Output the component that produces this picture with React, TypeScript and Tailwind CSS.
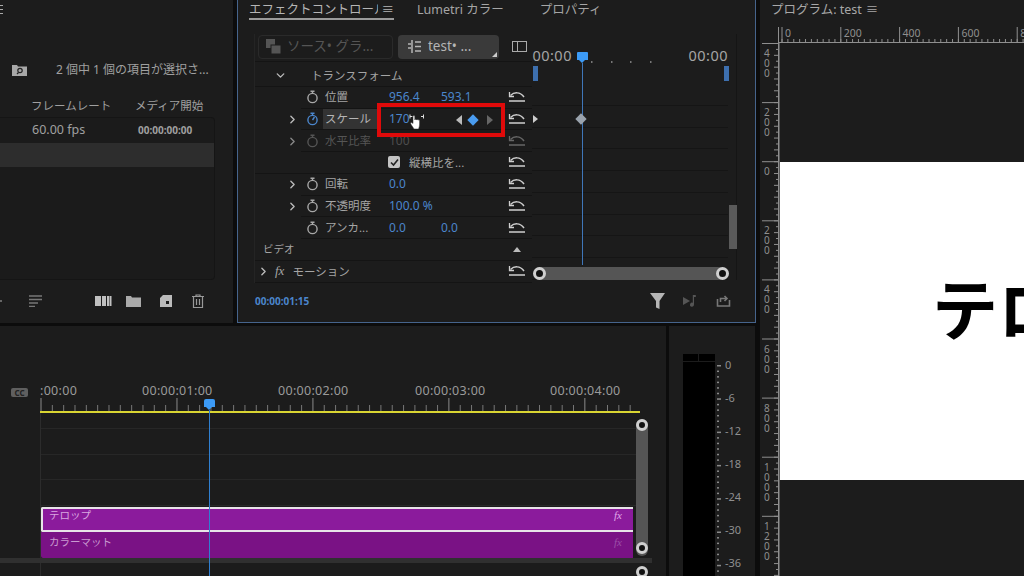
import { ChevronDown, ChevronRight } from "lucide-react";

const blue = "text-[#4b86cc]";

function Stopwatch({ on, dim }: { on?: boolean; dim?: boolean }) {
  const c = on ? "#4b86cc" : dim ? "#555" : "#a8a8a8";
  return (
    <svg width="13" height="14" viewBox="0 0 13 14" fill="none" stroke={c} strokeWidth="1.4">
      <circle cx="6.5" cy="8" r="4.6" />
      <path d="M4.5 1.2h4M6.5 1.2v2.4" />
      {on && <path d="M6.5 8l2-3" />}
    </svg>
  );
}

function Reset({ dim }: { dim?: boolean }) {
  return (
    <svg width="18" height="14" viewBox="0 0 18 14" fill="none" stroke={dim ? "#666" : "#cfcfcf"} strokeWidth="1.5">
      <path d="M2.5 5.5C6 2 12 1.5 16 7" />
      <path d="M1.5 2v4.5h4.5" strokeWidth="1.3" />
      <path d="M1 11h16" />
    </svg>
  );
}

type PropRow = {
  label: string;
  chevron?: boolean;
  values?: string[];
  on?: boolean;
  dim?: boolean;
};

function Row({ label, chevron, values = [], on, dim }: PropRow) {
  return (
    <div className="flex h-[21.75px] items-center">
      <div className="flex w-[46px] justify-end pr-[2px]">
        {chevron && <ChevronRight size={13} strokeWidth={2.5} className={dim ? "text-[#888]" : "text-[#bbb]"} />}
      </div>
      <div className="flex h-full flex-1 items-center border-b border-[#141414] pr-[6px]">
        <div className="ml-[5px] flex w-[15px]">
          <Stopwatch on={on} dim={dim} />
        </div>
        <div className={`ml-[2px] w-[55px] pl-[2px] leading-[20px] ${on ? "bg-[#333] text-[#b5b5b5]" : dim ? "text-[#555]" : "text-[#a5a5a5]"}`}>
          {label}
        </div>
        <div className={`ml-[11px] flex-1 text-[12px] ${dim ? "text-[#4d4d4d]" : blue}`}>
          {values.map((v) => (
            <span key={v} className="inline-block w-[52px]">
              {v}
            </span>
          ))}
        </div>
        <Reset dim={dim} />
      </div>
    </div>
  );
}

function EffectControls() {
  return (
    <div className="relative h-[323px] w-[519px] overflow-hidden border border-t-0 border-[#46648c] bg-[#1c1c1c] text-[11.5px] text-[#a5a5a5]">
      <div className="flex h-[20px] items-start pl-[11px] text-[12.5px] leading-[19px]">
        <div className="flex h-[20px] w-[145px] items-start gap-[3px] border-b-2 border-[#9a9a9a] text-[#b5b5b5]">
          <span className="w-[130px] overflow-hidden whitespace-nowrap">エフェクトコントロール</span>
          <span>≡</span>
        </div>
        <span className="ml-[23px]">Lumetri カラー</span>
        <span className="ml-[36px]">プロパティ</span>
      </div>

      <div className="mt-[14px] flex pl-[16px]">
        <div className="w-[278px] border-l border-[#242424]">
          <div className="flex h-[28px] items-center gap-[5px] border-b border-[#141414] pb-[2px] pl-[3px]">
            <div className="flex h-[24px] w-[135px] items-center gap-[6px] rounded-[4px] border border-[#2a2a2a] pl-[7px] text-[13.5px] text-[#555]">
              <svg width="15" height="15" viewBox="0 0 15 15" fill="#555">
                <rect x="0" y="0" width="9" height="9" />
                <rect x="5" y="6" width="10" height="9" stroke="#1c1c1c" />
              </svg>
              ソース• グラ...
            </div>
            <div className="relative flex h-[24px] w-[101px] items-center gap-[6px] rounded-[4px] bg-[#3a3a3a] pl-[9px] text-[13.5px] text-[#b5b5b5]">
              <svg width="15" height="13" viewBox="0 0 15 13" fill="none" stroke="#b5b5b5" strokeWidth="1.5">
                <path d="M5 0v13M1 4h3M1 8h3M8 2h6M8 6.5h6M8 11h6" />
              </svg>
              test• ...
              <span className="absolute bottom-[2px] right-[2px] h-0 w-0 border-b-[5px] border-l-[5px] border-b-[#ccc] border-l-transparent" />
            </div>
            <div className="ml-[8px] flex h-[11px] w-[15px] border border-[#aaa]">
              <div className="w-[5px] border-r border-[#aaa]" />
            </div>
          </div>

          <div className="mt-[3px] flex h-[21.75px] items-center border-b border-[#141414] pl-[19px]">
            <ChevronDown size={13} strokeWidth={2.5} className="text-[#bbb]" />
            <span className="ml-[24px]">トランスフォーム</span>
          </div>
          <Row label="位置" values={["956.4", "593.1"]} />
          <Row label="スケール" chevron on values={["170"]} />
          <Row label="水平比率" chevron dim values={["100"]} />
          <div className="flex h-[21.75px] items-center justify-between border-b border-[#141414] pr-[6px]">
            <div className="ml-[133px] flex items-center gap-[9px]">
              <span className="flex h-[12px] w-[12px] items-center justify-center rounded-[2px] bg-[#c4c4c4]">
                <svg width="9" height="9" viewBox="0 0 9 9" fill="none" stroke="#222" strokeWidth="1.6">
                  <path d="M1 4.5l2.5 2.5L8 1.5" />
                </svg>
              </span>
              縦横比を...
            </div>
            <Reset />
          </div>
          <Row label="回転" chevron values={["0.0"]} />
          <Row label="不透明度" chevron values={["100.0 %"]} />
          <Row label="アンカ..." values={["0.0", "0.0"]} />
          <div className="flex h-[21.75px] items-center justify-between border-b border-[#141414] pl-[8px] pr-[11px] text-[10.5px]">
            ビデオ
            <span className="h-0 w-0 border-x-[4px] border-b-[5px] border-x-transparent border-b-[#bbb]" />
          </div>
          <div className="flex h-[21.75px] items-center border-b border-[#141414] pl-[2px] pr-[6px]">
            <ChevronRight size={13} strokeWidth={2.5} className="text-[#bbb]" />
            <span className="ml-[5px] font-['Liberation_Serif',serif] text-[13px] italic">fx</span>
            <span className="ml-[8px] flex-1">モーション</span>
            <Reset />
          </div>
        </div>

        <div className="relative h-[246px] w-[205px] border-r border-[#151515]">
          <div className="h-[30px] overflow-hidden whitespace-nowrap pt-[12px] text-[14.5px] leading-[18px] tracking-[0.5px]">
            <div className="flex justify-between pr-[8px]">
              <span className="-ml-[4px] w-[46px] overflow-hidden">:00:00</span>
              <span>00:00</span>
            </div>
          </div>
          <div className="h-[20px]" />
          {Array.from({ length: 9 }).map((_, i) => (
            <div key={i} className="mr-[8px] h-[21.75px] border-b border-[#151515]" />
          ))}
        </div>
      </div>

      {/* timeline overlays */}
      <svg className="absolute left-[294px] top-[50px]" width="120" height="14" fill="#777">
        {[60, 80, 99, 119].map((x) => (
          <rect key={x} x={x - 1} y="11" width="1.5" height="2" />
        ))}
      </svg>
      <div className="absolute left-[295px] top-[66px] h-[15px] w-[5px] bg-[#3d6fae]" />
      <div className="absolute left-[486px] top-[66px] h-[15px] w-[5px] bg-[#3d6fae]" />
      <div className="absolute left-[339px] top-[52px] h-[8px] w-[11px] rounded-t-[1px] bg-[#3c9af5]" />
      <div className="absolute left-[341px] top-[60px] h-0 w-0 border-x-[3.5px] border-t-[3px] border-x-transparent border-t-[#3c9af5]" />
      <div className="absolute left-[344px] top-[63px] h-[202px] w-px bg-[#3f76b8]" />
      <div className="absolute left-[295px] top-[115px] h-0 w-0 border-y-[4px] border-l-[5px] border-y-transparent border-l-[#ccc]" />
      <div className="absolute left-[339px] top-[115px] h-[8px] w-[8px] rotate-45 bg-[#9aa3ad]" />
      <div className="absolute left-[491px] top-[205px] h-[44px] w-[8px] bg-[#5a5a5a]" />
      <div className="absolute left-[296px] top-[267px] h-[13px] w-[190px] rounded-[6px] bg-[#555]" />
      <div className="absolute left-[295px] top-[267px] h-[13px] w-[13px] rounded-full border-[3px] border-[#cfcfcf] bg-[#111]" />
      <div className="absolute left-[478px] top-[267px] h-[13px] w-[13px] rounded-full border-[3px] border-[#cfcfcf] bg-[#111]" />

      {/* red highlight and pointer */}
      <div className="absolute left-[139px] top-[103px] flex h-[34px] w-[128px] items-center border-4 border-[#e00a0a] bg-transparent pl-[75px]">
        <span className="h-0 w-0 border-y-[5px] border-r-[6px] border-y-transparent border-r-[#bbb]" />
        <span className="ml-[7px] h-[8px] w-[8px] rotate-45 bg-[#4a9cf0]" />
        <span className="ml-[10px] h-0 w-0 border-y-[5px] border-l-[6px] border-y-transparent border-l-[#666]" />
      </div>
      <svg className="absolute left-[171px] top-[112px]" width="16" height="18" viewBox="0 0 16 18">
        <path d="M1 4.5h2.5M1 2.5v4M12 4.5H14.5M14.5 2.5v4" stroke="#ddd" strokeWidth="1" fill="none" />
        <path d="M5 17c-1-2-3-4-3.5-6 .5-1 1.500-.5 2.500.5V4.500c0-1.200 1.800-1.200 1.800 0V8c0-1 1.700-1 1.700 0 0-.8 1.600-.8 1.600.2 0-.6 1.500-.5 1.500.5V12c0 2-.6 3.500-1 5z" fill="#fff" stroke="#333" strokeWidth=".5" />
      </svg>

      {/* footer */}
      <div className="absolute left-[17px] top-[295px] text-[10px] font-bold leading-[12px] text-[#4b86cc]">00:00:01:15</div>
      <svg className="absolute left-[412px] top-[293px]" width="16" height="17" viewBox="0 0 16 17" fill="#b5b5b5">
        <path d="M0 0h15L9.500 8v8L6 14.500V8z" />
      </svg>
      <svg className="absolute left-[445px] top-[294px]" width="16" height="14" viewBox="0 0 16 14" fill="#555">
        <path d="M0 3l7 4-7 4z" />
        <path d="M11 1v9.500a2 2 0 1 1-1.200-1.700V1h3v2h-1.800z" />
      </svg>
      <svg className="absolute left-[478px] top-[294px]" width="15" height="14" viewBox="0 0 15 14" fill="none" stroke="#777" strokeWidth="1.6">
        <path d="M1.500 5v7h12V6M4.500 8V4.500h6M8.500 2l2.500 2.500-2.500 2.500" />
      </svg>
    </div>
  );
}

function ProjectPanel() {
  return (
    <div className="relative h-[323px] w-[233px] overflow-hidden bg-[#1c1c1c] text-[12.5px] text-[#a0a0a0]">
      <div className="pt-[3px]">
        <div className="h-[12px] w-[3px] text-[0]">
          <div className="mt-[2px] h-px w-[3px] bg-[#aaa]" />
          <div className="mt-[3px] h-px w-[3px] bg-[#aaa]" />
          <div className="mt-[3px] h-px w-[3px] bg-[#aaa]" />
        </div>
      </div>
      <div className="mt-[45px] flex h-[16px] items-center pl-[12px] text-[12px] leading-none">
        <svg width="15" height="12" viewBox="0 0 15 12">
          <path d="M0 1h5l1 1.500h9V12H0z" fill="#a8a8a8" />
          <circle cx="8" cy="6.500" r="2.200" fill="none" stroke="#222" strokeWidth="1.200" />
          <path d="M6.500 8.500L5 10" stroke="#222" strokeWidth="1.200" />
        </svg>
        <span className="ml-[29px] whitespace-nowrap">2 個中 1 個の項目が選択さ...</span>
      </div>
      <div className="mt-[19px] flex h-[18px] items-center pl-[31px] text-[11.5px]">
        <span className="w-[104px]">フレームレート</span>
        <span>メディア開始</span>
      </div>
      <div className="mt-[2px] h-[163px] w-[215px] rounded-r-[4px] border border-l-0 border-[#151515] bg-[#1b1b1b]">
        <div className="flex h-[25px] items-center pl-[32px]">
          <span className="w-[106px]">60.00 fps</span>
          <span className="text-[10px] font-bold">00:00:00:00</span>
        </div>
        <div className="h-[24px] bg-[#2d2d2d]" />
      </div>
      <div className="mt-[12px] flex h-[18px] items-center">
        <div className="h-[2px] w-[2px] bg-[#666]" />
        <svg className="ml-[27px]" width="14" height="12" viewBox="0 0 14 12" stroke="#777" strokeWidth="1.500">
          <path d="M0 1h13M0 4.500h13M0 8h9M0 11.500h6" />
        </svg>
        <svg className="ml-[52px]" width="17" height="10" viewBox="0 0 17 10" fill="#c0c0c0">
          <rect width="6" height="10" />
          <rect x="7" width="4" height="10" />
          <rect x="12" width="2.500" height="10" />
          <rect x="15" width="1.500" height="10" />
        </svg>
        <svg className="ml-[14px]" width="15" height="11" viewBox="0 0 15 11" fill="#aaa">
          <path d="M0 0h5l1 1.500h9V11H0z" />
        </svg>
        <svg className="ml-[19px]" width="12" height="12" viewBox="0 0 12 12" fill="#bbb">
          <path d="M3 0h9v12H0V3zM6 6v3h3V6z" />
        </svg>
        <svg className="ml-[20px]" width="12" height="14" viewBox="0 0 12 14" fill="none" stroke="#999" strokeWidth="1.200">
          <path d="M0 2.500h12M4 2.500V1h4v1.500M1.500 2.500V13.500h9V2.500M4.500 5v6M7.500 5v6" />
        </svg>
      </div>
    </div>
  );
}

function TimelineRuler() {
  const ticks = Array.from({ length: 53 }, (_, i) => i);
  return (
    <svg width="600" height="16" viewBox="0 0 600 16" className="block">
      {ticks.map((i) => {
        const x = i * 11.33 + 0.5;
        const major = i % 12 === 0;
        return <rect key={i} x={x} y={major ? 0 : 7} width="1" height={major ? 13 : 6} fill={major ? "#8a8a8a" : "#777"} />;
      })}
      <rect x="0" y="13" width="600" height="2" fill="#d9d532" />
    </svg>
  );
}

function Timeline() {
  const labels = [
    { t: ":00:00", w: "w-[102px]" },
    { t: "00:00:01:00", w: "w-[136px]" },
    { t: "00:00:02:00", w: "w-[137px]" },
    { t: "00:00:03:00", w: "w-[135px]" },
    { t: "00:00:04:00", w: "w-[80px]" },
  ];
  return (
    <div className="relative h-[250px] w-[666px] overflow-hidden bg-[#1c1c1c] text-[#9a9a9a]">
      <div className="h-[59px]" />
      <div className="flex h-[28px]">
        <div className="w-[40px] pl-[11px] pt-[3px]">
          <div className="flex h-[9px] w-[17px] items-center justify-center rounded-[2px] bg-[#5f5f5f] text-[8px] font-bold leading-none text-[#222]">
            CC
          </div>
        </div>
        <div className="w-[600px]">
          <div className="flex h-[13px] items-center whitespace-nowrap text-[12.5px] leading-none tracking-[0.3px]">
            {labels.map((l) => (
              <span key={l.t} className={l.w}>
                {l.t}
              </span>
            ))}
          </div>
          <TimelineRuler />
        </div>
      </div>

      <div className="ml-[40px] w-[596px] border-l border-[#2c2c2c]">
        <div className="h-[16px] border-b border-[#272727]" />
        <div className="h-[26px] border-b border-[#272727]" />
        <div className="h-[25px] border-b border-[#272727]" />
        <div className="h-[26px] border-b border-[#272727]" />
        <div className="mt-px h-[25px] w-[592px] rounded-l-[2px] border-2 border-r-0 border-[#e8e4e8] bg-[#8b1b9c] pl-[6px] text-[10.5px] leading-[13px] text-[#d9a6e0]">
          <div className="flex justify-between pr-[11px]">
            テロップ
            <span className="font-['Liberation_Serif',serif] text-[11px] italic text-[#e0a8ea]">fx</span>
          </div>
        </div>
        <div className="h-[26px] w-[592px] rounded-bl-[2px] bg-[#7a1285] pl-[8px] pt-[3px] text-[10.5px] leading-[15px] text-[#c99ad0]">
          <div className="flex justify-between pr-[11px]">
            カラーマット
            <span className="font-['Liberation_Serif',serif] text-[11px] italic text-[#9c50a8]">fx</span>
          </div>
        </div>
      </div>
      <div className="h-[5px] w-[652px] bg-[#303030]" />
      <div className="ml-[40px] h-[20px] border-l border-[#2c2c2c]" />

      {/* playhead and scrollbars */}
      <div className="absolute left-[204px] top-[73px] h-[8px] w-[11px] rounded-t-[2px] bg-[#3c9af5]" />
      <div className="absolute left-[206px] top-[81px] h-0 w-0 border-x-[3.5px] border-t-[3px] border-x-transparent border-t-[#3c9af5]" />
      <div className="absolute bottom-0 left-[209px] top-[84px] w-px bg-[#2f7fd0]" />
      <div className="absolute left-[636px] top-[93px] h-[137px] w-[12px] rounded-[6px] bg-[#555]" />
      <div className="absolute left-[636px] top-[93px] h-[12px] w-[12px] rounded-full border-[3px] border-[#cfcfcf] bg-[#111]" />
      <div className="absolute left-[636px] top-[216px] h-[12px] w-[12px] rounded-full border-[3px] border-[#cfcfcf] bg-[#111]" />
      <div className="absolute left-[636px] top-[240px] h-[12px] w-[12px] rounded-full border-[3px] border-[#cfcfcf] bg-[#111]" />
    </div>
  );
}

function Meter() {
  const marks = ["0", "-6", "-12", "-18", "-24", "-30", "-36"];
  const dots = Array.from({ length: 40 }, (_, i) => i);
  return (
    <div className="flex h-[250px] w-[86px] bg-[#1c1c1c] pl-[14px] pt-[28px] text-[#8f8f8f]">
      <div className="h-[222px] w-[32px] bg-black">
        <div className="flex h-[8px] border-b border-[#1c1c1c]">
          <div className="w-[16px] border-r border-[#1c1c1c]" />
        </div>
      </div>
      <svg className="ml-[1px] block" width="6" height="222" viewBox="0 0 6 222" fill="#8a8a8a">
        {dots.map((i) => (
          <rect key={i} x="1" y={11 + i * 5.55} width={i % 6 === 0 ? 4 : 2} height="1.500" />
        ))}
      </svg>
      <div className="ml-[3px] flex flex-col gap-[20px] pt-[4px] text-[11px] leading-[13px]">
        {marks.map((m) => (
          <span key={m}>{m}</span>
        ))}
      </div>
    </div>
  );
}

function ProgramRulerTop() {
  const minor = Array.from({ length: 44 }, (_, i) => i);
  return (
    <svg width="264" height="18" viewBox="0 0 264 18" fill="#8f8f8f" className="block">
      <rect x="18" y="2" width="1" height="16" />
      {[0, 1, 2, 3, 4].map((i) => (
        <rect key={i} x={21.5 + i * 58.8} y="2" width="1" height="16" />
      ))}
      {minor.map((i) => (
        <rect key={i} x={21.5 + i * 5.88} y="14" width="1" height="3" />
      ))}
      <rect x="19" y="17" width="245" height="1" />
      {["0", "200", "400", "600", "800"].map((t, i) => (
        <text key={t} x={25 + i * 58.8} y="12" fontSize="10.500" fontFamily="Noto Sans">
          {t}
        </text>
      ))}
    </svg>
  );
}

function ProgramRulerLeft() {
  const minor = Array.from({ length: 92 }, (_, i) => i);
  const labels = ["400", "200", "0", "200", "400", "600", "800", "1000", "1200"];
  return (
    <svg width="20" height="533" viewBox="0 0 20 533" fill="#8f8f8f" className="block shrink-0">
      <rect x="18" y="0" width="1.500" height="533" />
      {labels.map((t, i) => (
        <g key={i}>
          <rect x="2" y={i * 59.1} width="17" height="1" />
          {t.split("").map((d, j) => (
            <text key={j} x="4" y={14 + i * 59.1 + j * 10} fontSize="10" fontFamily="Noto Sans">
              {d}
            </text>
          ))}
        </g>
      ))}
      {minor.map((i) => (
        <rect key={i} x={i % 2 === 0 ? 14 : 16} y={i * 5.91} width={i % 2 === 0 ? 4 : 2} height="1" />
      ))}
    </svg>
  );
}

function Program() {
  return (
    <div className="h-[576px] w-[264px] overflow-hidden bg-[#1c1c1c] text-[#a8a8a8]">
      <div className="flex h-[25px] items-start gap-[4px] pl-[11px] text-[12.5px] leading-[19px]">
        プログラム: test <span>≡</span>
      </div>
      <ProgramRulerTop />
      <div className="flex">
        <ProgramRulerLeft />
        <div className="flex-1 pt-[119px]">
          <div className="h-[318px] overflow-hidden whitespace-nowrap bg-white pl-[152px] pt-[102px] text-[66px] font-bold leading-[90px] text-black">
            テロップ
          </div>
        </div>
      </div>
    </div>
  );
}

export default function App() {
  return (
    <div className="flex h-[576px] w-[1024px] overflow-hidden bg-[#0c0c0c] font-['Noto_Sans','Noto_Sans_CJK_JP',sans-serif]">
      <div className="w-[756px]">
        <div className="flex gap-[4px]">
          <ProjectPanel />
          <EffectControls />
        </div>
        <div className="mt-[3px] flex gap-[3px]">
          <Timeline />
          <Meter />
        </div>
      </div>
      <div className="ml-[4px]">
        <Program />
      </div>
    </div>
  );
}
